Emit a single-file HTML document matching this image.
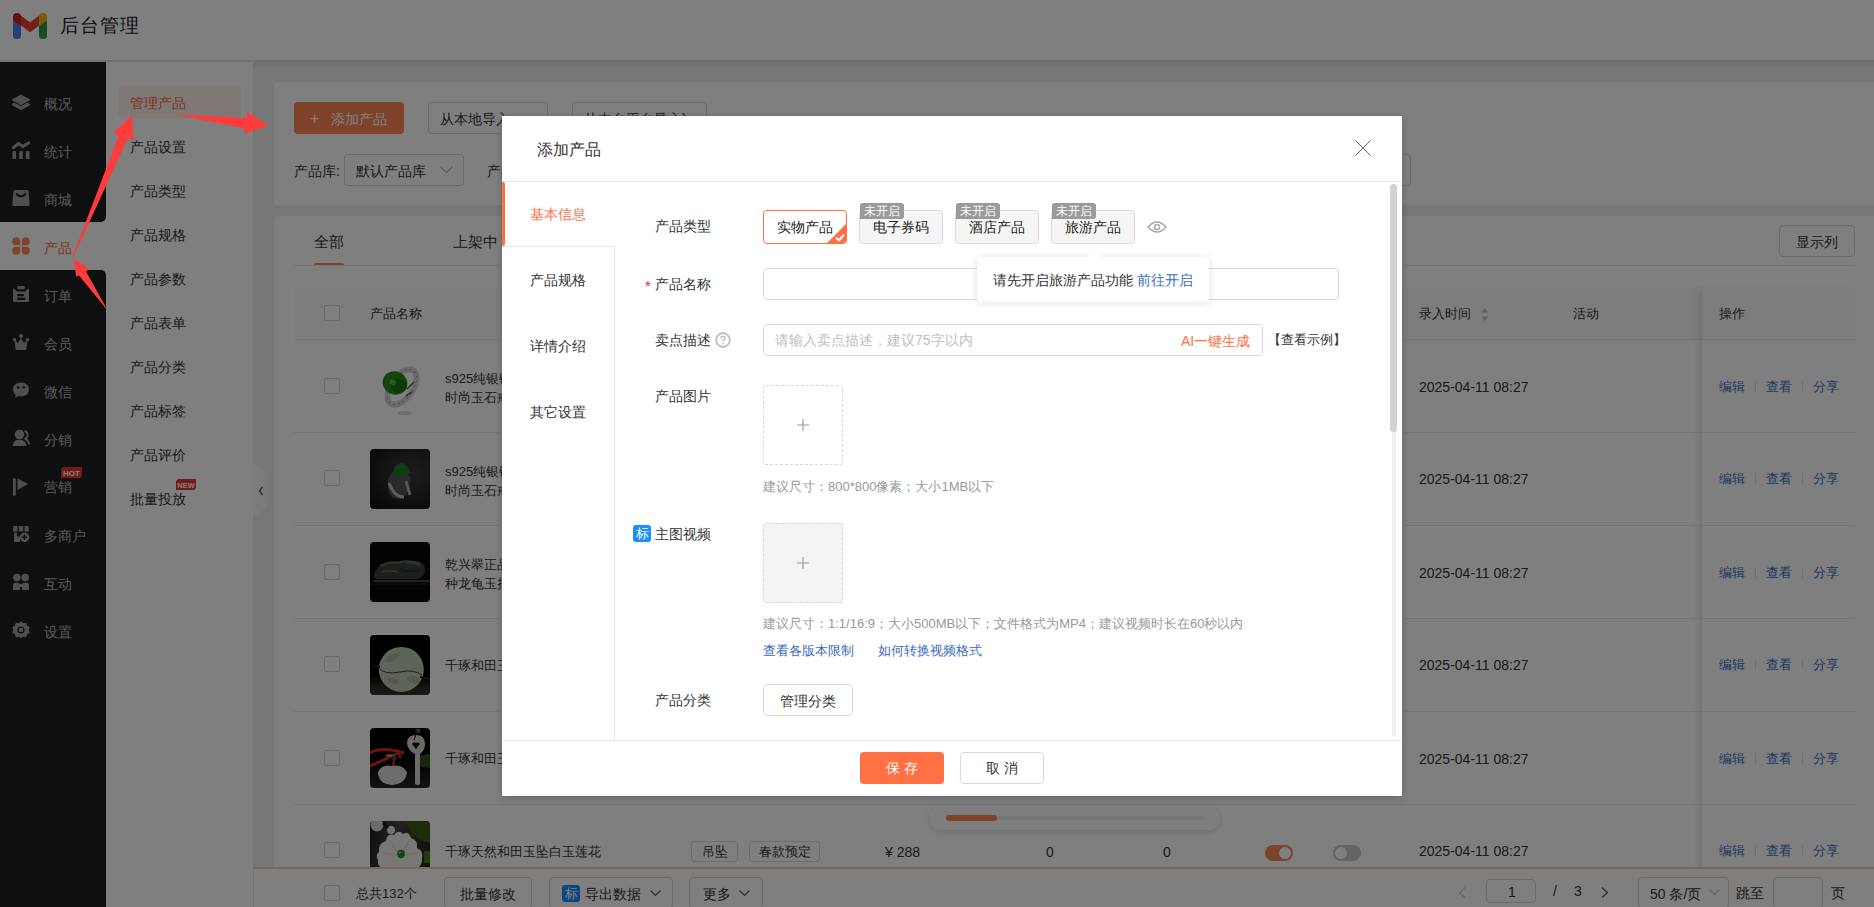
<!DOCTYPE html>
<html><head><meta charset="utf-8">
<style>
*{box-sizing:border-box;margin:0;padding:0}
html,body{width:1874px;height:907px;overflow:hidden;background:#eeeeee;font-family:"Liberation Sans",sans-serif;color:#333}
.a{position:absolute}
.t{position:absolute;white-space:nowrap;line-height:1}
#hdr{left:0;top:0;width:1874px;height:60px;background:#fff}
#side{left:0;top:62px;width:106px;height:845px;background:#1c1e22}
.si{position:absolute;left:0;width:106px;height:48px}
.si .ic{position:absolute;left:12px;top:15px;width:18px;height:18px}
.si .tx{position:absolute;left:44px;top:19px;font-size:14px;line-height:14px;color:#b4b4b4;white-space:nowrap}
#sub{left:106px;top:62px;width:147px;height:845px;background:#fff}
.sm{position:absolute;left:130px;font-size:14px;line-height:14px;color:#333;white-space:nowrap}
.card{background:#fff;border-radius:4px}
.btn{position:absolute;border:1px solid #d9d9d9;border-radius:4px;background:#fff;font-size:14px;line-height:14px;color:#333;white-space:nowrap}
.cb{position:absolute;width:16px;height:16px;border:1px solid #d4d4d4;border-radius:2px;background:#fff}
.rowb{position:absolute;left:294px;width:1561px;height:1px;background:#e8e8e8}
.nm{position:absolute;left:445px;font-size:13px;line-height:19px;color:#333;white-space:nowrap}
.dt{position:absolute;left:1419px;font-size:14px;line-height:14px;color:#333;white-space:nowrap}
.op{position:absolute;font-size:13px;line-height:13px;color:#4070c0;white-space:nowrap}
.sep{position:absolute;width:1px;height:11px;background:#e3e3e3}
.img{position:absolute;left:370px;width:60px;height:60px;border-radius:4px;overflow:hidden}
#ov{left:0;top:0;width:1874px;height:907px;background:rgba(0,0,0,.5)}
#modal{left:502px;top:116px;width:900px;height:680px;background:#fff;box-shadow:0 2px 8px rgba(0,0,0,.2)}
.lbl{position:absolute;left:655px;font-size:14px;line-height:14px;color:#333;white-space:nowrap}
.nav{position:absolute;left:530px;font-size:14px;line-height:14px;color:#333;white-space:nowrap}
.pt{position:absolute;width:84px;height:34px;border:1px solid #dcdcdc;border-radius:4px;background:#f5f5f5;font-size:14px;line-height:14px;color:#222}
.badge{position:absolute;width:44px;height:16px;background:#9a9a9a;color:#fff;font-size:12px;line-height:16px;text-align:center;border-radius:3px 3px 3px 0}
.hint{position:absolute;left:763px;font-size:13px;line-height:13px;color:#999;white-space:nowrap}
.link{position:absolute;font-size:13px;line-height:13px;color:#3b6cc0;white-space:nowrap}
</style></head><body>

<!-- HEADER -->
<div id="hdr" class="a">
  <svg class="a" style="left:13px;top:13px" width="34" height="26" viewBox="0 0 34 26">
    <rect x="0" y="5" width="8" height="21" rx="3.5" fill="#4a80e8"/>
    <rect x="26" y="5" width="8" height="21" rx="3.5" fill="#2e9a4a"/>
    <path d="M0 4 A4 4 0 0 1 8 4 L8 13 L0 7.5 Z" fill="#c8231c"/>
    <path d="M26 4 A4 4 0 0 1 34 4 L34 7.5 L26 13 Z" fill="#f5b50a"/>
    <path d="M8 2.7 L17 9.2 L26 2.7 L26 12.6 L17 19.2 L8 12.6 Z" fill="#e8402f"/>
  </svg>
  <div class="t" style="left:60px;top:16px;font-size:19px;line-height:19px;color:#222;letter-spacing:1px">后台管理</div>
</div>

<!-- SIDEBAR -->
<div id="side" class="a"></div>
<div id="sideitems">
  <!-- active product item bg (light) with inverted corners -->
  <div class="a" style="left:0;top:212px;width:106px;height:68px;background:#fff"></div>
  <div class="a" style="left:0;top:62px;width:106px;height:160px;background:#1c1e22;border-bottom-right-radius:5px"></div>
  <div class="a" style="left:0;top:270px;width:106px;height:637px;background:#1c1e22;border-top-right-radius:5px"></div>

  <div class="si" style="top:78px">
    <svg class="ic" viewBox="0 0 18 18"><path d="M9 2.2 L17.5 6.8 L9 11.4 L0.5 6.8 Z" fill="#9e9e9e" stroke="#9e9e9e" stroke-width="1.2" stroke-linejoin="round"/><path d="M2.4 10.3 L9 13.8 L15.6 10.3 L17.6 11.6 L9 16.4 L0.4 11.6 Z" fill="#9e9e9e" stroke="#9e9e9e" stroke-width="1.4" stroke-linejoin="round"/></svg>
    <div class="tx">概况</div></div>
  <div class="si" style="top:126px">
    <svg class="ic" viewBox="0 0 18 18"><path d="M1.5 6.5 L6.5 2.5 L11 5.5 L16.5 2" stroke="#9e9e9e" stroke-width="3.2" fill="none" stroke-linecap="round" stroke-linejoin="round"/><rect x="0.5" y="10" width="3.6" height="8.5" rx="1" fill="#9e9e9e"/><rect x="7.2" y="10" width="3.6" height="8.5" rx="1" fill="#9e9e9e"/><rect x="13.9" y="10" width="3.6" height="8.5" rx="1" fill="#9e9e9e"/></svg>
    <div class="tx">统计</div></div>
  <div class="si" style="top:174px">
    <svg class="ic" viewBox="0 0 18 18"><path d="M3 1 L15 1 Q16.5 1 16.6 2.5 L17.6 15.5 Q17.7 17 16 17 L2 17 Q0.3 17 0.4 15.5 L1.4 2.5 Q1.5 1 3 1 Z" fill="#9e9e9e"/><path d="M4.5 5 Q9 9.5 13.5 5" stroke="#1c1e22" stroke-width="1.8" fill="none" stroke-linecap="round"/></svg>
    <div class="tx">商城</div></div>
  <div class="si" style="top:222px">
    <svg class="ic" viewBox="0 0 18 18"><path d="M8.2 8.2 L4 8.2 A4 4 0 1 1 8.2 4 Z" fill="#fe8456"/><path d="M9.8 8.2 L9.8 4 A4 4 0 1 1 14 8.2 Z" fill="#fe8456"/><path d="M8.2 9.8 L8.2 14 A4 4 0 1 1 4 9.8 Z" fill="#fe8456"/><path d="M9.8 9.8 L14 9.8 A4 4 0 1 1 9.8 14 Z" fill="#fe8456"/></svg>
    <div class="tx" style="color:#ff6a3a">产品</div></div>
  <div class="si" style="top:270px">
    <svg class="ic" viewBox="0 0 18 18"><path d="M2 3.5 Q1 3.5 1 5 L1 15.5 Q1 17 2.5 17 L15.5 17 Q17 17 17 15.5 L17 5 Q17 3.5 16 3.5 L13 6.5 L5 6.5 Z" fill="#9e9e9e"/><rect x="5.2" y="1" width="7.6" height="3.2" rx="1.2" fill="#9e9e9e"/><rect x="5" y="9" width="7" height="2.2" rx="1" fill="#1c1e22"/><rect x="5" y="12.8" width="8.5" height="2.2" rx="1" fill="#1c1e22"/></svg>
    <div class="tx">订单</div></div>
  <div class="si" style="top:318px">
    <svg class="ic" viewBox="0 0 18 18"><circle cx="9" cy="3" r="2" fill="#9e9e9e"/><circle cx="2.5" cy="6.8" r="1.8" fill="#9e9e9e"/><circle cx="15.5" cy="6.8" r="1.8" fill="#9e9e9e"/><path d="M2.5 6.5 L6 10 L9 5 L12 10 L15.5 6.5 L14.5 16 Q14.4 17 13.5 17 L4.5 17 Q3.6 17 3.5 16 Z" fill="#9e9e9e"/></svg>
    <div class="tx">会员</div></div>
  <div class="si" style="top:366px">
    <svg class="ic" viewBox="0 0 18 18"><path d="M9 1.5 C13.8 1.5 17 4.6 17 8.4 C17 12.3 13.8 15.4 9 15.4 C8 15.4 7 15.2 6.2 14.9 L3 17 L3.8 13.9 C2 12.6 1 10.6 1 8.4 C1 4.6 4.2 1.5 9 1.5 Z" fill="#9e9e9e"/><circle cx="6.2" cy="6.5" r="1.3" fill="#1c1e22"/><circle cx="11.8" cy="6.5" r="1.3" fill="#1c1e22"/></svg>
    <div class="tx">微信</div></div>
  <div class="si" style="top:414px">
    <svg class="ic" viewBox="0 0 18 18"><circle cx="7.5" cy="5.5" r="4.8" fill="#9e9e9e"/><path d="M0.8 17 Q1 10.5 7.5 10.5 Q14 10.5 14.5 17 Z" fill="#9e9e9e"/><path d="M12.5 2 Q16 3 15.5 7 Q15 9 13.5 9.8 Q17 12 17 15.5" stroke="#9e9e9e" stroke-width="2" fill="none"/></svg>
    <div class="tx">分销</div></div>
  <div class="si" style="top:462px">
    <svg class="ic" style="top:16px" viewBox="0 0 18 18"><rect x="1" y="0" width="2.8" height="18" rx="1.4" fill="#9e9e9e"/><path d="M5.5 0.5 L16 6 L5.5 12 Z" fill="#9e9e9e"/></svg>
    <div class="tx" style="top:18px">营销</div>
    <svg class="a" style="left:61px;top:5px" width="21" height="11" viewBox="0 0 21 11"><path d="M2 0 L21 0 L21 9 L19 11 L0 11 L0 2 Z" fill="#e53935"/><text x="10.5" y="8.6" font-family="Liberation Sans" font-weight="bold" font-size="8" fill="#fff" text-anchor="middle">HOT</text></svg>
  </div>
  <div class="si" style="top:510px">
    <svg class="ic" viewBox="0 0 18 18"><path d="M1.5 1 L5.5 1 L5.5 6.5 L1 6.5 Z M6.8 1 L11.2 1 L11.2 6.5 L6.8 6.5 Z M12.5 1 L16.5 1 L17 6.5 L12.5 6.5 Z" fill="#9e9e9e"/><path d="M2 7.5 L5 7.5 L5 11.5 L8 11.5 L8 17 L2 17 Z" fill="#9e9e9e"/><circle cx="12.5" cy="12.3" r="4.8" fill="#9e9e9e"/><path d="M12.5 9.5 L12.5 15 M9.8 12.3 L15.2 12.3" stroke="#1c1e22" stroke-width="1.4"/></svg>
    <div class="tx">多商户</div></div>
  <div class="si" style="top:558px">
    <svg class="ic" viewBox="0 0 18 18"><circle cx="4.8" cy="4.5" r="3.8" fill="#9e9e9e"/><circle cx="13.2" cy="4.5" r="3.8" fill="#9e9e9e"/><path d="M1 17 L1 12 Q1 9.5 4.5 9.5 Q7 9.5 9 11.5 Q11 9.5 13.5 9.5 Q17 9.5 17 12 L17 17 L10 17 L10 14 L8 14 L8 17 Z" fill="#9e9e9e"/></svg>
    <div class="tx">互动</div></div>
  <div class="si" style="top:606px">
    <svg class="ic" viewBox="0 0 18 18"><path d="M9 0.8 L11 2.8 L13.8 2.2 L14.6 5 L17.2 6.2 L16.2 9 L17.2 11.8 L14.6 13 L13.8 15.8 L11 15.2 L9 17.2 L7 15.2 L4.2 15.8 L3.4 13 L0.8 11.8 L1.8 9 L0.8 6.2 L3.4 5 L4.2 2.2 L7 2.8 Z" fill="#9e9e9e" stroke="#9e9e9e" stroke-width="1" stroke-linejoin="round"/><circle cx="9" cy="9" r="3.6" fill="#1c1e22"/><circle cx="9" cy="9" r="2.2" fill="#9e9e9e"/></svg>
    <div class="tx">设置</div></div>
</div>

<!-- SUBMENU -->
<div id="sub" class="a"></div>
<div class="a" style="left:118px;top:86px;width:123px;height:32px;background:#fff1ec;border-radius:4px"></div>
<div class="sm" style="top:96px;color:#ff6a3a">管理产品</div>
<div class="sm" style="top:140px">产品设置</div>
<div class="sm" style="top:184px">产品类型</div>
<div class="sm" style="top:228px">产品规格</div>
<div class="sm" style="top:272px">产品参数</div>
<div class="sm" style="top:316px">产品表单</div>
<div class="sm" style="top:360px">产品分类</div>
<div class="sm" style="top:404px">产品标签</div>
<div class="sm" style="top:448px">产品评价</div>
<div class="sm" style="top:492px">批量投放</div>
<svg class="a" style="left:176px;top:479px" width="20" height="11" viewBox="0 0 20 11"><path d="M2 0 L20 0 L20 9 L18 11 L0 11 L0 2 Z" fill="#e53935"/><text x="10" y="8.5" font-family="Liberation Sans" font-weight="bold" font-size="7.5" fill="#fff" text-anchor="middle">NEW</text></svg>
<!-- collapse handle -->
<div class="a" style="left:253px;top:62px;width:1px;height:845px;background:#e2e2e2"></div>
<svg class="a" style="left:253px;top:464px" width="16" height="52" viewBox="0 0 16 52"><path d="M0 0 Q14 6 14 14 L14 38 Q14 46 0 52 Z" fill="#f7f7f7"/><path d="M9.5 23 L6.5 27 L9.5 31" stroke="#555" stroke-width="1.3" fill="none"/></svg>

<!-- CONTENT -->
<div id="content">
  <div class="a card" style="left:274px;top:82px;width:1610px;height:123px"></div>
  <div class="a" style="left:294px;top:102px;width:110px;height:32px;background:#fe8456;border-radius:4px"></div>
  <div class="t" style="left:310px;top:111px;font-size:16px;line-height:16px;color:#fff">+</div>
  <div class="t" style="left:331px;top:112px;font-size:14px;line-height:14px;color:#fff">添加产品</div>
  <div class="btn" style="left:428px;top:102px;width:120px;height:32px"><span class="t" style="left:11px;top:9px">从本地导入</span></div>
  <div class="btn" style="left:572px;top:102px;width:135px;height:32px"><span class="t" style="left:11px;top:9px">从中台平台导入)</span></div>
  <div class="t" style="left:294px;top:164px;font-size:14px;line-height:14px;color:#333">产品库:</div>
  <div class="btn" style="left:344px;top:154px;width:120px;height:32px"><span class="t" style="left:11px;top:9px">默认产品库</span>
    <svg class="a" style="left:95px;top:11px" width="13" height="8" viewBox="0 0 13 8"><path d="M0.5 0.5 L6.5 6.5 L12.5 0.5" stroke="#bbb" stroke-width="1.1" fill="none"/></svg></div>
  <div class="t" style="left:487px;top:164px;font-size:14px;line-height:14px;color:#333">产品</div>
  <div class="btn" style="left:1200px;top:154px;width:211px;height:32px"></div>

  <div class="a card" style="left:274px;top:216px;width:1610px;height:700px"></div>
  <div class="t" style="left:314px;top:234px;font-size:15px;line-height:15px;color:#333">全部</div>
  <div class="a" style="left:314px;top:263px;width:30px;height:3px;background:#fe8456;border-radius:2px"></div>
  <div class="t" style="left:453px;top:234px;font-size:15px;line-height:15px;color:#333">上架中</div>
  <div class="a" style="left:294px;top:265px;width:1561px;height:1px;background:#e8e8e8"></div>
  <div class="btn" style="left:1779px;top:225px;width:76px;height:32px"><span class="t" style="left:16px;top:9px">显示列</span></div>

  <!-- table header -->
  <div class="a" style="left:294px;top:287px;width:1561px;height:52px;background:#fafafa"></div>
  <div class="rowb" style="top:339px"></div>
  <div class="cb" style="left:324px;top:305px"></div>
  <div class="t" style="left:370px;top:307px;font-size:13px;line-height:13px;color:#333">产品名称</div>
  <div class="t" style="left:1419px;top:307px;font-size:13px;line-height:13px;color:#333">录入时间</div>
  <svg class="a" style="left:1480px;top:307px" width="9" height="15" viewBox="0 0 9 15"><path d="M4.5 1 L8 5.5 L1 5.5 Z M4.5 14 L8 9.5 L1 9.5 Z" fill="#c0c0c0"/></svg>
  <div class="t" style="left:1573px;top:307px;font-size:13px;line-height:13px;color:#333">活动</div>
  <!-- fixed column -->
  <div class="a" style="left:1702px;top:287px;width:153px;height:620px;box-shadow:-6px 0 8px -4px rgba(0,0,0,.12)"></div>
  <div class="t" style="left:1719px;top:307px;font-size:13px;line-height:13px;color:#333">操作</div>

  <div id="rows">
<div class="cb" style="left:324px;top:378px"></div>
<div class="img" style="top:356px;background:#fff"><svg width="60" height="60" viewBox="0 0 60 60"><ellipse cx="35" cy="57" rx="7" ry="2" fill="#ddd"/><ellipse cx="32" cy="31" rx="11" ry="20" fill="none" stroke="#d4d4d4" stroke-width="6" transform="rotate(35 32 31)"/><ellipse cx="32" cy="31" rx="11" ry="20" fill="none" stroke="#9a9a9a" stroke-width="1" stroke-dasharray="2 3" transform="rotate(35 32 31)"/><path d="M37 33 L44 26 M36 40 L42 36" stroke="#555" stroke-width="1.5"/><ellipse cx="25" cy="27" rx="12.5" ry="11.5" fill="#2a8a1a" transform="rotate(20 25 27)"/><ellipse cx="29" cy="30" rx="8" ry="7" fill="#0f6a0a" opacity=".7"/><rect x="20" y="24" width="6" height="5" fill="#8fc080" opacity=".6" transform="rotate(20 23 26)"/></svg></div>
<div class="nm" style="top:369px">s925纯银镶嵌和田玉戒指<br>时尚玉石戒指女款</div>
<div class="dt" style="top:380px">2025-04-11 08:27</div>
<div class="op" style="left:1719px;top:380px">编辑</div><div class="sep" style="left:1755px;top:381px"></div><div class="op" style="left:1766px;top:380px">查看</div><div class="sep" style="left:1802px;top:381px"></div><div class="op" style="left:1813px;top:380px">分享</div>
<div class="rowb" style="top:432px"></div>
<div class="cb" style="left:324px;top:470px"></div>
<div class="img" style="top:449px;background:radial-gradient(ellipse at 70% 40%,#3a3a3a 0%,#262626 45%,#0a0a0a 100%)"><svg width="60" height="60" viewBox="0 0 60 60"><path d="M18 30 Q22 20 34 22 Q42 26 40 34 Q38 48 30 50 Q20 50 18 40 Z" fill="#555"/><path d="M19 34 Q24 48 34 48" stroke="#bbb" stroke-width="3" fill="none"/><path d="M36 32 L40 46" stroke="#aaa" stroke-width="3"/><path d="M22 26 Q24 15 31 14 Q38 15 40 24 Q34 28 22 26 Z" fill="#1e7a22"/></svg></div>
<div class="nm" style="top:462px">s925纯银镶嵌和田玉戒指<br>时尚玉石戒指男款</div>
<div class="dt" style="top:472px">2025-04-11 08:27</div>
<div class="op" style="left:1719px;top:472px">编辑</div><div class="sep" style="left:1755px;top:473px"></div><div class="op" style="left:1766px;top:472px">查看</div><div class="sep" style="left:1802px;top:473px"></div><div class="op" style="left:1813px;top:472px">分享</div>
<div class="rowb" style="top:525px"></div>
<div class="cb" style="left:324px;top:564px"></div>
<div class="img" style="top:542px;background:#060708"><svg width="60" height="60" viewBox="0 0 60 60"><path d="M4 33 Q5 25 14 22 Q30 18 46 19 Q55 20 55 28 Q55 35 47 37 L8 37 Q3 37 4 33 Z" fill="#3c3d38"/><path d="M10 24 Q20 19 30 21 M30 20 Q40 18 50 22" stroke="#5a6a48" stroke-width="2.2" fill="none"/><path d="M36 21 Q44 20 50 24" stroke="#4a6a70" stroke-width="2" fill="none"/><path d="M12 30 Q20 28 27 30" stroke="#6a6a6a" stroke-width="1.6" fill="none"/><path d="M30 27 Q40 32 50 28" stroke="#2a2a2a" stroke-width="1.5" fill="none"/><rect x="3" y="38" width="57" height="2" fill="#3e3e3e"/><rect x="0" y="40" width="60" height="3" fill="#121212"/></svg></div>
<div class="nm" style="top:555px">乾兴翠正品和田玉手把件<br>种龙龟玉把件摆件</div>
<div class="dt" style="top:566px">2025-04-11 08:27</div>
<div class="op" style="left:1719px;top:566px">编辑</div><div class="sep" style="left:1755px;top:567px"></div><div class="op" style="left:1766px;top:566px">查看</div><div class="sep" style="left:1802px;top:567px"></div><div class="op" style="left:1813px;top:566px">分享</div>
<div class="rowb" style="top:618px"></div>
<div class="cb" style="left:324px;top:656px"></div>
<div class="img" style="top:635px;background:linear-gradient(#000 0%,#000 68%,#262626 85%,#343434 100%)"><svg width="60" height="60" viewBox="0 0 60 60"><circle cx="31.3" cy="34.4" r="22.5" fill="#bcc8ae"/><path d="M14 26 Q20 16 30 19 Q24 30 14 26 Z M36 42 Q46 38 51 46 Q42 53 36 42 Z M18 44 Q24 40 30 48 Q22 52 18 44 Z" fill="#a6b494"/><path d="M9 33 Q14 40 30 37 Q44 34 52 40" stroke="#444" stroke-width="1" fill="none"/><path d="M2 30 L10 32 M50 42 L60 44" stroke="#222" stroke-width="2"/></svg></div>
<div class="nm" style="top:656px">千琢和田玉平安扣吊坠</div>
<div class="dt" style="top:658px">2025-04-11 08:27</div>
<div class="op" style="left:1719px;top:658px">编辑</div><div class="sep" style="left:1755px;top:659px"></div><div class="op" style="left:1766px;top:658px">查看</div><div class="sep" style="left:1802px;top:659px"></div><div class="op" style="left:1813px;top:658px">分享</div>
<div class="rowb" style="top:711px"></div>
<div class="cb" style="left:324px;top:750px"></div>
<div class="img" style="top:728px;background:linear-gradient(#000 0%,#050505 55%,#262626 100%)"><svg width="60" height="60" viewBox="0 0 60 60"><path d="M46 30 Q52 26 60 26 L60 40 Q52 40 46 36 Z" fill="#2f4a1a"/><path d="M0 25 Q12 18 34 25" stroke="#d42a1e" stroke-width="3" fill="none"/><path d="M0 38 Q14 32 26 26 Q30 24 30 30" stroke="#d42a1e" stroke-width="3" fill="none"/><path d="M16 28 Q22 26 26 30" stroke="#d4a82a" stroke-width="2" fill="none"/><circle cx="24" cy="30" r="2.5" fill="#444"/><path d="M24 32 L23 38" stroke="#d42a1e" stroke-width="2"/><path d="M8 44 Q12 36 22 38 Q32 36 37 44 Q36 56 22 57 Q8 56 8 44 Z" fill="#d8d8d4"/><circle cx="48" cy="3" r="2.5" fill="#555"/><path d="M37 14 Q38 7 46 7 Q55 7 55 16 Q55 22 50 26 L50 56 Q48 58 45 56 L45 26 Q37 22 37 14 Z" fill="#d4d4ce"/><path d="M42 16 L46 21 L50 16 Q48 13 46 15 Q44 13 42 16 Z" fill="#111"/><path d="M47 3 L44 12" stroke="#222" stroke-width="1.2"/></svg></div>
<div class="nm" style="top:749px">千琢和田玉钥匙吊坠</div>
<div class="dt" style="top:752px">2025-04-11 08:27</div>
<div class="op" style="left:1719px;top:752px">编辑</div><div class="sep" style="left:1755px;top:753px"></div><div class="op" style="left:1766px;top:752px">查看</div><div class="sep" style="left:1802px;top:753px"></div><div class="op" style="left:1813px;top:752px">分享</div>
<div class="rowb" style="top:804px"></div>
<div class="cb" style="left:324px;top:842px"></div>
<div class="img" style="top:821px;background:linear-gradient(100deg,#1e1a1a 0%,#4a4242 40%,#3e3636 62%,#1c1c1c 100%)"><svg width="60" height="60" viewBox="0 0 60 60"><path d="M34 0 L60 0 L60 22 Q46 20 38 6 Z" fill="#3a5a12"/><rect x="54" y="30" width="6" height="12" fill="#3a7a1a"/><circle cx="7" cy="4" r="6.5" fill="#d8d8d4"/><circle cx="21" cy="9" r="4.2" fill="#e6e6e2"/><path d="M13 2 L18 7" stroke="#111" stroke-width="2.5"/><path d="M9 31 Q8 22 16 20 Q17 12 24 14 Q28 8 33 13 Q39 10 41 17 Q48 19 47 27 Q54 30 52 38 Q53 50 30 52 Q6 50 8 39 Q5 34 9 31 Z" fill="#efeeea"/><path d="M20 20 Q26 30 30 33 M40 18 Q34 30 31 33 M12 32 Q24 34 30 34 M48 32 Q36 34 31 34" stroke="#cfcdc8" stroke-width=".8" fill="none"/><ellipse cx="31" cy="33" rx="3.8" ry="4.2" fill="#1c8a22"/><ellipse cx="30" cy="31.5" rx="1.3" ry="1.3" fill="#6fd070"/></svg></div>
<div class="nm" style="top:842px">千琢天然和田玉坠白玉莲花</div>
<div class="dt" style="top:844px">2025-04-11 08:27</div>
<div class="op" style="left:1719px;top:844px">编辑</div><div class="sep" style="left:1755px;top:845px"></div><div class="op" style="left:1766px;top:844px">查看</div><div class="sep" style="left:1802px;top:845px"></div><div class="op" style="left:1813px;top:844px">分享</div>
<div class="a" style="left:691px;top:841px;width:47px;height:21px;border:1px solid #dcdcdc;border-radius:3px;font-size:13px;line-height:19px;text-align:center;color:#333">吊坠</div>
<div class="a" style="left:749px;top:841px;width:71px;height:21px;border:1px solid #dcdcdc;border-radius:3px;font-size:13px;line-height:19px;text-align:center;color:#333">春款预定</div>
<div class="t" style="left:885px;top:845px;font-size:14px;line-height:14px;color:#333">¥ 288</div>
<div class="t" style="left:1046px;top:845px;font-size:14px;line-height:14px;color:#333">0</div>
<div class="t" style="left:1163px;top:845px;font-size:14px;line-height:14px;color:#333">0</div>
<div class="a" style="left:1265px;top:845px;width:28px;height:16px;border-radius:8px;background:#fe8456"><div class="a" style="left:14px;top:2px;width:12px;height:12px;border-radius:6px;background:#fff"></div></div>
<div class="a" style="left:1333px;top:845px;width:28px;height:16px;border-radius:8px;background:#c8c8c8"><div class="a" style="left:2px;top:2px;width:12px;height:12px;border-radius:6px;background:#fff"></div></div>
</div><!--/rows-->

  <!-- horizontal scrollbar -->
  <div class="a" style="left:929px;top:806px;width:291px;height:24px;background:#fdfdfd;border-radius:12px;box-shadow:0 2px 6px rgba(0,0,0,.13)"></div>
  <div class="a" style="left:946px;top:816px;width:259px;height:4px;background:#efefef;border-radius:2px"></div>
  <div class="a" style="left:946px;top:815px;width:51px;height:6px;background:#fe8456;border-radius:3px"></div>

  <!-- footer bar -->
  <div class="a" style="left:254px;top:867px;width:1620px;height:40px;background:#fff;border-top:2px solid #f5cdbf"></div>
  <div class="cb" style="left:324px;top:885px"></div>
  <div class="t" style="left:356px;top:887px;font-size:13px;line-height:13px;color:#333">总共132个</div>
  <div class="btn" style="left:444px;top:877px;width:88px;height:32px"><span class="t" style="left:15px;top:9px">批量修改</span></div>
  <div class="btn" style="left:549px;top:877px;width:124px;height:32px">
    <span class="a" style="left:12px;top:7px;width:18px;height:17px;background:#1890ff;border-radius:3px;color:#fff;font-size:13px;line-height:17px;text-align:center">标</span>
    <span class="t" style="left:35px;top:9px">导出数据</span>
    <svg class="a" style="left:100px;top:12px" width="11" height="7" viewBox="0 0 11 7"><path d="M0.5 0.5 L5.5 5.5 L10.5 0.5" stroke="#555" stroke-width="1.2" fill="none"/></svg></div>
  <div class="btn" style="left:689px;top:877px;width:74px;height:32px"><span class="t" style="left:13px;top:9px">更多</span>
    <svg class="a" style="left:49px;top:12px" width="11" height="7" viewBox="0 0 11 7"><path d="M0.5 0.5 L5.5 5.5 L10.5 0.5" stroke="#555" stroke-width="1.2" fill="none"/></svg></div>
  <svg class="a" style="left:1458px;top:887px" width="8" height="11" viewBox="0 0 8 11"><path d="M7 0.5 L1.5 5.5 L7 10.5" stroke="#ccc" stroke-width="1.2" fill="none"/></svg>
  <div class="btn" style="left:1486px;top:879px;width:50px;height:24px"><span class="t" style="left:21px;top:5px">1</span></div>
  <div class="t" style="left:1553px;top:884px;font-size:14px;line-height:14px;color:#333">/</div>
  <div class="t" style="left:1574px;top:884px;font-size:14px;line-height:14px;color:#333">3</div>
  <svg class="a" style="left:1601px;top:887px" width="8" height="11" viewBox="0 0 8 11"><path d="M1 0.5 L6.5 5.5 L1 10.5" stroke="#555" stroke-width="1.2" fill="none"/></svg>
  <div class="btn" style="left:1638px;top:877px;width:91px;height:32px"><span class="t" style="left:11px;top:9px">50 条/页</span>
    <svg class="a" style="left:70px;top:11px" width="11" height="7" viewBox="0 0 11 7"><path d="M0.5 0.5 L5.5 5.5 L10.5 0.5" stroke="#ccc" stroke-width="1.1" fill="none"/></svg></div>
  <div class="t" style="left:1736px;top:886px;font-size:14px;line-height:14px;color:#333">跳至</div>
  <div class="btn" style="left:1773px;top:877px;width:50px;height:32px"></div>
  <div class="t" style="left:1831px;top:886px;font-size:14px;line-height:14px;color:#333">页</div>
</div>

<div class="a" style="left:0;top:60px;width:1874px;height:2px;background:linear-gradient(rgba(0,0,0,.09),rgba(0,0,0,.04))"></div>
<div class="a" style="left:253px;top:62px;width:1621px;height:6px;background:linear-gradient(rgba(0,0,0,.05),rgba(0,0,0,0))"></div>
<div id="ov" class="a"></div>

<div id="modal" class="a"></div>
<div id="mc">
  <div class="t" style="left:537px;top:142px;font-size:16px;line-height:16px;color:#333">添加产品</div>
  <svg class="a" style="left:1355px;top:140px" width="16" height="16" viewBox="0 0 16 16"><path d="M0.5 0.5 L15.5 15.5 M15.5 0.5 L0.5 15.5" stroke="#666" stroke-width="1"/></svg>
  <div class="a" style="left:502px;top:181px;width:900px;height:1px;background:#e6e6ea"></div>
  <!-- left nav -->
  <div class="a" style="left:502px;top:182px;width:3px;height:64px;background:#ff7043;border-radius:0 2px 2px 0"></div>
  <div class="a" style="left:502px;top:246px;width:113px;height:1px;background:#e6e6ea"></div>
  <div class="a" style="left:614px;top:246px;width:1px;height:494px;background:#e6e6ea"></div>
  <div class="nav" style="left:530px;top:207px;color:#ff7043">基本信息</div>
  <div class="nav" style="top:273px">产品规格</div>
  <div class="nav" style="top:339px">详情介绍</div>
  <div class="nav" style="top:405px">其它设置</div>
  <!-- form -->
  <div class="lbl" style="top:219px">产品类型</div>
  <div class="pt" style="left:763px;top:210px;border-color:#ff7043;background:#fff;overflow:hidden"><span class="t" style="left:13px;top:9px">实物产品</span>
    <svg class="a" style="left:62px;top:12px" width="21" height="21" viewBox="0 0 21 21"><path d="M21 0 L21 21 L0 21 Z" fill="#ff7043"/><path d="M10 14.5 L13 17.5 L18 11.5" stroke="#fff" stroke-width="2" fill="none"/></svg></div>
  <div class="pt" style="left:859px;top:210px"><span class="t" style="left:13px;top:9px">电子券码</span></div>
  <div class="badge" style="left:860px;top:203px">未开启</div>
  <div class="pt" style="left:955px;top:210px"><span class="t" style="left:13px;top:9px">酒店产品</span></div>
  <div class="badge" style="left:956px;top:203px">未开启</div>
  <div class="pt" style="left:1051px;top:210px"><span class="t" style="left:13px;top:9px">旅游产品</span></div>
  <div class="badge" style="left:1052px;top:203px">未开启</div>
  <svg class="a" style="left:1147px;top:220px" width="20" height="14" viewBox="0 0 20 14"><path d="M1 7 Q10 -3 19 7 Q10 17 1 7 Z" stroke="#aaa" stroke-width="1.5" fill="none"/><circle cx="10" cy="7" r="2.6" stroke="#aaa" stroke-width="1.5" fill="none"/></svg>

  <div class="t" style="left:645px;top:278px;font-size:15px;line-height:15px;color:#f5222d">*</div>
  <div class="lbl" style="top:277px">产品名称</div>
  <div class="a" style="left:763px;top:268px;width:576px;height:32px;border:1px solid #d9d9d9;border-radius:4px"></div>

  <div class="lbl" style="top:333px">卖点描述</div>
  <svg class="a" style="left:715px;top:332px" width="16" height="16" viewBox="0 0 16 16"><circle cx="8" cy="8" r="6.8" stroke="#bbb" stroke-width="1.7" fill="none"/><path d="M5.9 6.3 Q5.9 4.2 8 4.2 Q10.1 4.2 10.1 6 Q10.1 7.2 8.7 7.9 Q8 8.3 8 9.6" stroke="#bbb" stroke-width="1.5" fill="none"/><circle cx="8" cy="11.7" r="1" fill="#bbb"/></svg>
  <div class="a" style="left:763px;top:324px;width:500px;height:32px;border:1px solid #d9d9d9;border-radius:4px"></div>
  <div class="t" style="left:775px;top:333px;font-size:14px;line-height:14px;color:#c0c0c0">请输入卖点描述，建议75字以内</div>
  <div class="t" style="left:1181px;top:334px;font-size:14px;line-height:14px;color:#ff7043">AI一键生成</div>
  <div class="t" style="left:1268px;top:333px;font-size:13px;line-height:13px;color:#333">【查看示例】</div>

  <div class="lbl" style="top:389px">产品图片</div>
  <div class="a" style="left:763px;top:385px;width:80px;height:80px;border:1px dashed #d6d6d6;border-radius:3px"></div>
  <svg class="a" style="left:797px;top:419px" width="12" height="12" viewBox="0 0 12 12"><path d="M6 0 L6 12 M0 6 L12 6" stroke="#999" stroke-width="1.1"/></svg>
  <div class="hint" style="top:480px">建议尺寸：800*800像素；大小1MB以下</div>

  <div class="a" style="left:633px;top:525px;width:18px;height:17px;background:#1890ff;border-radius:3px;color:#fff;font-size:13px;line-height:17px;text-align:center">标</div>
  <div class="lbl" style="top:527px">主图视频</div>
  <div class="a" style="left:763px;top:523px;width:80px;height:80px;border:1px dashed #d6d6d6;border-radius:3px;background:#f4f4f4"></div>
  <svg class="a" style="left:797px;top:557px" width="12" height="12" viewBox="0 0 12 12"><path d="M6 0 L6 12 M0 6 L12 6" stroke="#999" stroke-width="1.1"/></svg>
  <div class="hint" style="top:617px">建议尺寸：1:1/16:9；大小500MB以下；文件格式为MP4；建议视频时长在60秒以内</div>
  <div class="link" style="left:763px;top:644px">查看各版本限制</div>
  <div class="link" style="left:878px;top:644px">如何转换视频格式</div>

  <div class="lbl" style="top:693px">产品分类</div>
  <div class="btn" style="left:763px;top:684px;width:90px;height:32px"><span class="t" style="left:16px;top:9px">管理分类</span></div>

  <!-- scrollbar -->
  <div class="a" style="left:1392px;top:184px;width:4px;height:553px;background:#f0f0f0;border-radius:2px"></div>
  <div class="a" style="left:1390px;top:184px;width:7px;height:248px;background:#d2d2d2;border-radius:4px"></div>

  <!-- tooltip -->
  <div class="a" style="left:977px;top:257px;width:232px;height:45px;background:#fff;border-radius:4px;box-shadow:0 1px 8px rgba(0,0,0,.12)"></div>
  <svg class="a" style="left:1083px;top:250px" width="20" height="8" viewBox="0 0 20 8"><path d="M2 8 L10 0.5 L18 8 Z" fill="#fff"/></svg>
  <div class="t" style="left:993px;top:273px;font-size:14px;line-height:14px;color:#333">请先开启旅游产品功能</div>
  <div class="t" style="left:1137px;top:273px;font-size:14px;line-height:14px;color:#3b6cc0">前往开启</div>

  <!-- footer -->
  <div class="a" style="left:502px;top:740px;width:900px;height:1px;background:#e6e6ea"></div>
  <div class="a" style="left:860px;top:752px;width:84px;height:32px;background:#ff7043;border-radius:4px;color:#fff;font-size:14px;line-height:32px;text-align:center;letter-spacing:4px;text-indent:4px">保存</div>
  <div class="btn" style="left:960px;top:752px;width:84px;height:32px;line-height:30px;text-align:center;letter-spacing:4px;text-indent:4px">取消</div>
</div>

<svg id="arrows" class="a" style="left:0;top:0" width="1874" height="907" viewBox="0 0 1874 907">
  <polygon points="180.9,114.4 246.9,117.9 247.2,112 268.6,125.5 244.1,133.7 244.8,128.5 180.5,115.4" fill="#ff3b3b"/>
  <polygon points="72.9,255.7 118.7,135.8 113.5,132.3 132,115.2 133.7,140.2 127.6,138.5 73.8,256.2" fill="#ff3b3b"/>
  <polygon points="105.9,308.6 79,275.6 76.1,276.8 74,259 89.3,269 86,271.4 106.3,308" fill="#ff3b3b"/>
</svg>
</body></html>
